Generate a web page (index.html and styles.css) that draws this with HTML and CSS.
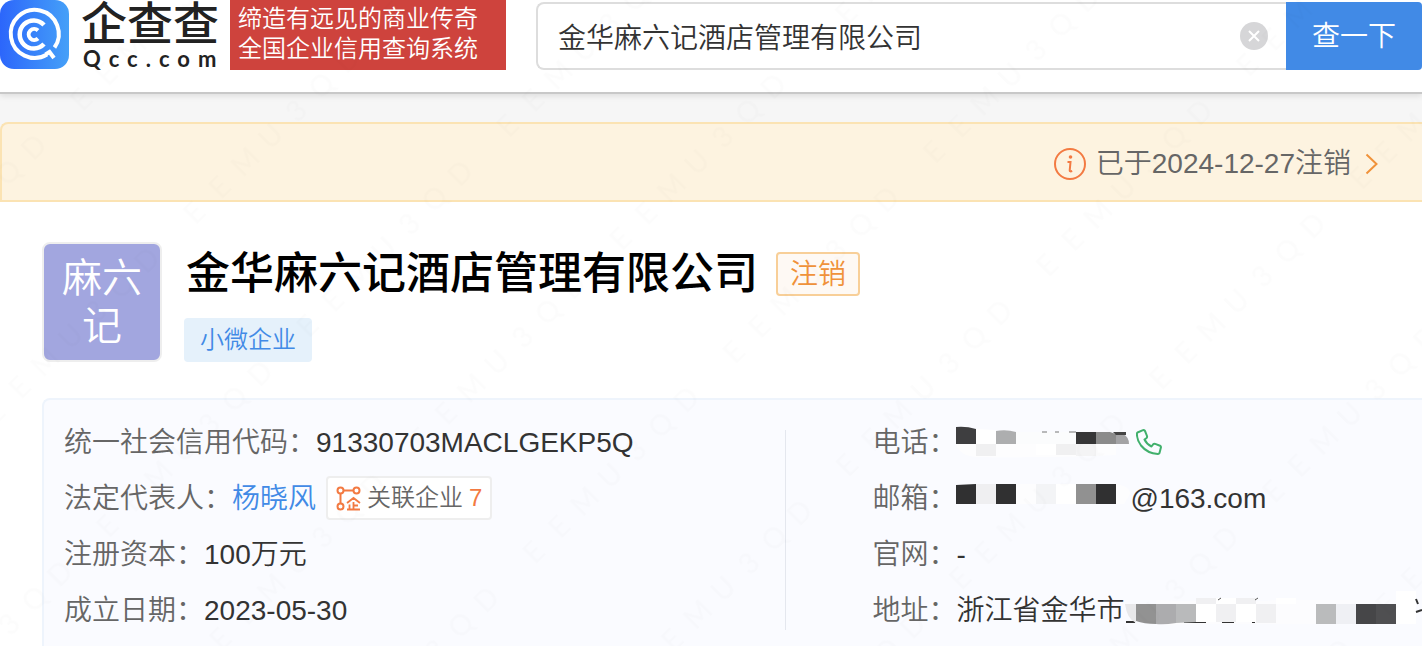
FILE: index.html
```html
<!DOCTYPE html>
<html lang="zh-CN">
<head>
  <meta charset="UTF-8" />
  <meta name="viewport" content="width=device-width, initial-scale=1.0">
  <title>金华麻六记酒店管理有限公司 - 企查查</title>
  <link rel="stylesheet" href="styles.css">
</head>
<body>
  <header class="header">
    <a class="logo" href="#">
      <svg class="logo-icon" viewBox="0 0 69 69" aria-hidden="true">
        <defs>
          <linearGradient id="logo-bg" x1="0" y1="0" x2="1" y2="0">
            <stop offset="0" stop-color="#2c66fb" />
            <stop offset="1" stop-color="#45a0f8" />
          </linearGradient>
        </defs>
        <rect width="69" height="69" rx="14" fill="url(#logo-bg)" />
        <g fill="none" stroke="#fff">
          <path d="M54.500 47.500A24 24 0 1 0 47 54.500" stroke-width="4" />
          <path d="M45.500 54.500l4-2.500 4.500 6" stroke-width="4" />
          <path d="M44 25A14 14 0 1 0 44 44" stroke-width="4.500" />
          <path d="M38 30.500A5.500 5.500 0 1 0 38 38.500" stroke-width="4" />
        </g>
      </svg>
      <span class="logo-text">
        <span class="logo-name">企查查</span>
        <span class="logo-domain">Qcc.com</span>
      </span>
    </a>
    <div class="slogan">缔造有远见的商业传奇<br>全国企业信用查询系统</div>
    <form class="search">
      <div class="search-box">
        <input class="search-input" type="text" aria-label="企业名称" value="金华麻六记酒店管理有限公司">
        <button class="search-clear" type="reset" aria-label="清空">
          <svg viewBox="0 0 28 28"><circle cx="14" cy="14" r="14" fill="#d6d6d8" /><path d="M9 9l10 10M19 9L9 19" stroke="#fff" stroke-width="2" /></svg>
        </button>
      </div>
      <button class="search-btn" type="button">查一下</button>
    </form>
  </header>

  <main>
    <a class="notice" href="#">
      <svg class="notice-icon" viewBox="0 0 32 32" aria-hidden="true">
        <circle cx="16" cy="16" r="15" fill="none" stroke="#f37a42" stroke-width="2" />
        <circle cx="16.500" cy="9" r="1.800" fill="#f37a42" />
        <path d="M13.500 14h3l-.8 8.500q0 1.500 2.500 .5" fill="none" stroke="#f37a42" stroke-width="2" />
      </svg>
      <span>已于2024-12-27注销</span>
      <svg class="notice-arrow" viewBox="0 0 14 22" aria-hidden="true"><path d="M1.500 1.500l10 9.500-10 9.500" fill="none" stroke="#f0923a" stroke-width="2" /></svg>
    </a>

    <section class="card">
      <div class="company">
        <div class="avatar">麻六记</div>
        <div class="company-main">
          <div class="company-title">
            <h1>金华麻六记酒店管理有限公司</h1>
            <span class="status">注销</span>
          </div>
          <span class="tag">小微企业</span>
        </div>
      </div>

      <div class="info">
        <dl class="info-col">
          <div class="row"><dt>统一社会信用代码：</dt><dd>91330703MACLGEKP5Q</dd></div>
          <div class="row">
            <dt>法定代表人：</dt>
            <dd>
              <a class="person" href="#">杨晓风</a>
              <a class="related" href="#">
                <svg viewBox="0 0 25 25" aria-hidden="true">
                  <g fill="none" stroke="#f37a42" stroke-width="2">
                    <circle cx="4.500" cy="4.500" r="3" />
                    <circle cx="20.500" cy="4.500" r="3" />
                    <circle cx="4.500" cy="20.500" r="3" />
                    <path d="M7.500 4.500h10M4.500 7.500v10" />
                    <path d="M11 17l6.500-5 6.500 5M17.500 16v7.500M18 19.500h4M13.500 18.500v5M11 23.500h13" stroke-width="1.800" />
                  </g>
                </svg>
                <span>关联企业</span>
                <span class="related-num">7</span>
              </a>
            </dd>
          </div>
          <div class="row"><dt>注册资本：</dt><dd>100万元</dd></div>
          <div class="row"><dt>成立日期：</dt><dd>2023-05-30</dd></div>
        </dl>

        <dl class="info-col info-col-right">
          <div class="row">
            <dt>电话：</dt>
            <dd>
              <svg class="mask" width="174" height="56" viewBox="0 0 174 56" aria-hidden="true">
                <path d="M0 30h160v11q-60 3-140 2-16-1-20-13z" fill="#fdfdfe" />
                <path d="M0 13q10-1 20 2v15H0z" fill="#3e3e40" />
                <path d="M20 15l20 1v14H20z" fill="#fff" />
                <path d="M40 17q10-2 20 1v12H40z" fill="#adaeaf" />
                <path d="M60 18h60v12H60z" fill="#fbfcfd" />
                <path d="M86 18h5M99 18h4M113 18h7" stroke="#777" />
                <path d="M120 18h20v12h-20z" fill="#363637" />
                <path d="M140 18h14l6 2v10h-20z" fill="#8b8b8b" />
                <path d="M160 20h7q6 3 6 10h-13z" fill="#a3a3a5" />
                <path d="M157 18h13v3h-10z" fill="#444" />
                <path d="M20 30h20v12H20zM100 30h20v11h-20z" fill="#f0f0f1" />
                <path d="M80 30h20v11H80z" fill="#fff" />
                <path d="M120 30h20v12h-20z" fill="#f4f4f5" />
              </svg>
              <svg class="phone" viewBox="0 0 26 26" aria-hidden="true">
                <path d="M1.500 3.500L7 1.200q1.500-.4 2 .8l2 5q.4 1.300-.7 2.200L8.500 10.500q2 4.500 7 7l1.500-2q1-1 2.200-.6l4.800 1.800q1.200.6.9 1.900L23.500 24q-.5 1-1.700.9Q11.500 24.500 5 16.500 1 11 .9 5q0-1 .6-1.500z" fill="none" stroke="#41b06c" stroke-width="2" stroke-linejoin="round" />
              </svg>
            </dd>
          </div>
          <div class="row">
            <dt>邮箱：</dt>
            <dd>
              <svg class="mask" width="174" height="56" viewBox="0 0 174 56" aria-hidden="true">
                <path d="M20 14h140q14 2 14 10l-6 10H20z" fill="#fdfdfe" />
                <path d="M0 15l20-1v20H0zM40 14h20v20H40zM140 14h20v20h-20z" fill="#303031" />
                <path d="M20 14h20v20H20z" fill="#efeff1" />
                <path d="M80 14h20v20H80z" fill="#f3f4f6" />
                <path d="M100 14h20v20h-20z" fill="#fff" />
                <path d="M120 14h20v20h-20z" fill="#919191" />
              </svg>
              <span>@163.com</span>
            </dd>
          </div>
          <div class="row"><dt>官网：</dt><dd>-</dd></div>
          <div class="row">
            <dt>地址：</dt>
            <dd>
              <span>浙江省金华市</span>
              <svg class="mask" width="298" height="56" viewBox="0 -4 298 56" aria-hidden="true">
                <path d="M32 14l20 1h90l10-1h120v-4h20v28H62q-45 4-60-14v-6h30z" fill="#fcfcfe" />
                <path d="M2 36h9M60 36h22M98 36h12M128 36h3M134 36h2" stroke="#333" stroke-width="2" />
                <path d="M1 18h11v19Q3 33 1 18z" fill="#e8e8ea" />
                <path d="M12 18h20v20q-12 0-20-3z" fill="#929292" />
                <path d="M32 18h20v19q-12 2-20 1z" fill="#acacae" />
                <path d="M52 18h20v18l-20 1z" fill="#b9babb" />
                <path d="M72 18h20v18H72zM112 18h20v18h-20zM92 12h20v6H92zM152 12h20v6h-20zM272 5h20v33h-20z" fill="#fff" />
                <path d="M92 18h20v18H92zM72 12h20v6H72zM112 12h20v6h-20zM132 18h20v19h-20z" fill="#f0f0f2" />
                <path d="M94 14l3-2M131 14l3-2" stroke="#555" />
                <path d="M192 18h20v20h-20z" fill="#babbbc" />
                <path d="M212 18h20v20h-20z" fill="#eff0f4" />
                <path d="M232 18h20v20h-20z" fill="#464648" />
                <path d="M252 18h20v20h-20z" fill="#4f4f51" />
                <path d="M292 13l2 5M292 26l6-2" fill="none" stroke="#333" stroke-width="2" />
              </svg>
            </dd>
          </div>
        </dl>
      </div>
    </section>
  </main>

  <svg class="watermark" aria-hidden="true">
    <defs>
      <pattern id="wm" x="-40" y="50" width="283" height="160" patternUnits="userSpaceOnUse" patternTransform="rotate(-45)">
        <text class="watermark-text" x="27 63 99 135 171 207 243" y="88">EEMU3QD</text>
      </pattern>
    </defs>
    <rect width="100%" height="100%" fill="url(#wm)" />
  </svg>
</body>
</html>
```
FILE: styles.css
```css
* {
  box-sizing: border-box;
}

html, body {
  margin: 0;
  padding: 0;
  min-height: 100%;
}

body {
  position: relative;
  display: flex;
  flex-direction: column;
  min-height: 100vh;
  overflow-x: hidden;
  font-family: "Liberation Sans", "Noto Sans CJK SC", sans-serif;
  font-size: 28px;
  line-height: 42px;
  font-weight: 350;
  color: #333;
  background-color: #f6f6f6;
}

a {
  color: inherit;
  text-decoration: none;
}

input, button {
  font: inherit;
  border: 0;
  padding: 0;
}

svg {
  display: block;
  flex-shrink: 0;
}

/* header */
.header {
  position: relative;
  display: flex;
  align-items: flex-start;
  height: 94px;
  background-color: #fff;
  border-bottom: 2px solid #c8c8c8;
  box-shadow: 0 2px 6px rgba(0, 0, 0, 0.1);
}

.logo {
  display: flex;
  width: 230px;
  flex-shrink: 0;
  color: #222;
}

.logo-icon {
  width: 69px;
  height: 69px;
}

.logo-text {
  display: flex;
  flex-direction: column;
  padding-left: 12px;
}

.logo-name {
  font-size: 46px;
  line-height: 48px;
  font-weight: 500;
}

.logo-domain {
  padding-left: 2px;
  font-family: Lato, sans-serif;
  font-size: 22px;
  line-height: 22px;
  font-weight: 700;
  letter-spacing: 8px;
}

.slogan {
  flex-shrink: 0;
  width: 276px;
  padding: 4px 8px 6px;
  font-size: 24px;
  line-height: 30px;
  color: #fff;
  background-color: #ce433d;
}

.search {
  display: flex;
  flex: 1;
  height: 68px;
  margin: 2px 0 0 30px;
}

.search-box {
  display: flex;
  flex: 1;
  align-items: center;
  padding: 0 18px 0 20px;
  background-color: #fff;
  border: 2px solid #ddd;
  border-right: 0;
  border-radius: 8px 0 0 8px;
}

.search-input {
  flex: 1;
  min-width: 0;
  height: 60px;
  color: #333;
  background: none;
  outline: none;
}

.search-clear {
  width: 28px;
  height: 28px;
  background: none;
}

.search-btn {
  width: 136px;
  padding-top: 2px;
  color: #fff;
  background-color: #418ae6;
  border-radius: 0 4px 4px 0;
}

/* notice bar */
main {
  display: flex;
  flex: 1;
  flex-direction: column;
  margin-top: 28px;
}

.notice {
  display: flex;
  align-items: center;
  justify-content: flex-end;
  height: 80px;
  padding: 4px 43px 0 0;
  color: #666;
  background-color: #fdf3e0;
  border: 2px solid #fbe3b3;
  border-right: 0;
  border-radius: 8px 0 0 0;
}

.notice-icon {
  width: 32px;
  height: 32px;
  margin-right: 10px;
}

.notice-arrow {
  width: 14px;
  height: 22px;
  margin-left: 14px;
}

/* company */
.card {
  flex: 1;
  padding: 40px 0 0 42px;
  background-color: #fff;
}

.company {
  display: flex;
}

.avatar {
  width: 120px;
  height: 120px;
  padding: 10px 16px;
  font-size: 40px;
  line-height: 48px;
  text-align: center;
  color: #fff;
  background-color: #a2a6df;
  border: 2px solid #eee;
  border-radius: 8px;
}

.company-main {
  display: flex;
  flex-direction: column;
  align-items: flex-start;
  justify-content: space-between;
  padding-left: 22px;
}

.company-title {
  display: flex;
  align-items: center;
  gap: 18px;
}

h1 {
  margin: 0;
  padding-left: 2px;
  font-size: 44px;
  line-height: 64px;
  font-weight: 500;
  color: #000;
}

.status {
  height: 44px;
  padding: 0 12px;
  color: #f0923a;
  background-color: #fef9f4;
  border: 2px solid #f8cf98;
  border-radius: 4px;
}

.tag {
  padding: 0 16px;
  font-size: 24px;
  line-height: 44px;
  color: #418ae6;
  background-color: #e5f1fb;
  border-radius: 4px;
}

/* info panel */
.info {
  display: grid;
  grid-template-columns: 17fr 15fr;
  margin-top: 36px;
  padding: 14px 0 14px 20px;
  background-color: #fafbff;
  border: 2px solid #eef4fc;
  border-right: 0;
  border-radius: 8px 0 0 0;
}

.info-col {
  position: relative;
  min-width: 0;
  margin: 0;
  overflow: hidden;
}

.info-col-right {
  padding-left: 87px;
}

.info-col-right::before {
  content: "";
  position: absolute;
  top: 16px;
  bottom: 8px;
  left: 0;
  width: 1px;
  background-color: #e4e7ee;
}

.row {
  display: flex;
  align-items: center;
  height: 56px;
  white-space: nowrap;
}

dt, dd {
  padding-top: 2px;
}

dt {
  color: #666;
}

dd {
  display: flex;
  align-items: center;
  margin: 0;
}

.mask {
  margin-top: -2px;
}

.person {
  color: #418ae6;
}

.related {
  display: flex;
  align-items: center;
  height: 44px;
  margin: -2px 0 0 10px;
  padding: 0 8px;
  font-size: 24px;
  color: #666;
  background-color: #fff;
  border: 2px solid #eee;
  border-radius: 4px;
}

.related svg {
  width: 25px;
  height: 25px;
  margin-right: 6px;
}

.related-num {
  margin-left: 6px;
  color: #f37a42;
}

.phone {
  width: 26px;
  height: 26px;
  margin: -2px 0 0 6px;
}

/* watermark */
.watermark {
  position: absolute;
  top: 0;
  left: 0;
  width: 100%;
  height: 100%;
  pointer-events: none;
}

.watermark-text {
  font-family: Lato, sans-serif;
  font-size: 28px;
  font-weight: 400;
  text-anchor: middle;
  fill: #000;
  fill-opacity: 0.013;
}
```
